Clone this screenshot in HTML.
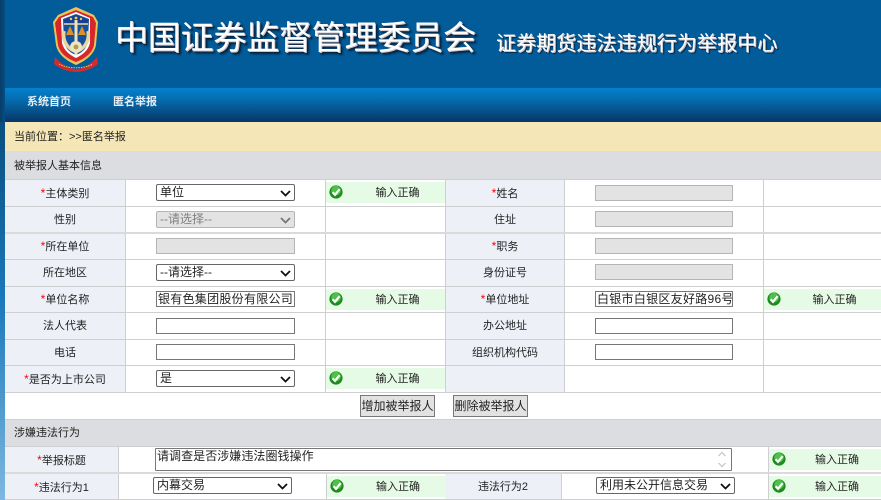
<!DOCTYPE html>
<html lang="zh-CN"><head><meta charset="utf-8"><title>中国证券监督管理委员会</title>
<style>
html,body{margin:0;padding:0;width:881px;height:500px;overflow:hidden;background:#fff}
body{position:relative;font-family:"Liberation Sans","Noto Sans CJK SC",sans-serif;font-size:12px;color:#222}
div,span.a{position:absolute;box-sizing:border-box}
.l{background:#eef0f8}
.h{background:#cfcfd2}
.t{text-align:center;line-height:26px;height:26px;white-space:nowrap;font-size:11px}
.t b{color:#f00;font-weight:normal;font-size:12px}
.ok{background:#e6fbe6;height:21px;line-height:22px;text-align:center;white-space:nowrap;font-size:11px;padding-left:24px}
.ok svg{position:absolute;left:3px;top:3px}
.d{background:#e3e3e3;border:1px solid #b5b5b5;height:16px;width:139px}
.i{background:#fff;border:1px solid #777;height:16px;width:139px;white-space:nowrap;overflow:hidden;line-height:14px;font-size:12px;padding:0 1px;letter-spacing:.28px}
.s{background:#fff;border:1px solid #666;border-radius:2px;height:17px;width:139px;line-height:15px;padding-left:3px;white-space:nowrap;color:#222;font-size:12px}
.s svg{position:absolute;right:3px;top:5px}
.s.off{background:#e3e3e3;border-color:#b5b5b5;color:#808080}
.btn{background:#e2e2e2;border:1px solid #777;height:22px;width:75px;line-height:20px;text-align:center;white-space:nowrap;font-size:12px;color:#222}
.sec{left:5px;width:876px;background:#dcdde0;line-height:26px;padding-left:9px;font-size:11px}
.title{font-family:"Liberation Sans","Noto Sans CJK SC",sans-serif;font-weight:400;color:#fff;white-space:nowrap;text-shadow:1px 1px 0 #c9c3c8,2px 2px 1px #0a2340,3px 3px 2px #06233f}
</style></head><body>
<svg width="0" height="0" style="position:absolute"><defs>
<symbol id="c" viewBox="0 0 14 14"><circle cx="7" cy="7" r="6.6" fill="#1f8a1f"/><circle cx="7" cy="5.6" r="4.8" fill="#4fc04a"/><path d="M3.6 7.2 6 9.8 10.6 4.2" fill="none" stroke="#fff" stroke-width="2.2"/></symbol>
<symbol id="v" viewBox="0 0 11 7"><path d="M1 1 5.5 5.5 10 1" fill="none" stroke="currentColor" stroke-width="1.8"/></symbol>
</defs></svg>

<div style="left:0;top:0;width:5px;height:500px;background:linear-gradient(#0a4a7a 0,#0a4f80 25%,#1a78bb 60%,#7fb8e0 100%)"></div>
<div style="left:5px;top:0;width:876px;height:88px;background:#025c9a"></div>
<div style="left:0;top:0;width:5px;height:122px;background:linear-gradient(90deg,#083c66,#034f85)"></div>
<div style="left:5px;top:88px;width:876px;height:33px;background:linear-gradient(#0380cc 0,#0570b4 30%,#06497f 80%,#07386a 100%)"></div>
<div style="left:5px;top:121px;width:876px;height:1px;background:#0b3a63"></div>

<svg style="position:absolute;left:50px;top:5px" width="52" height="68" viewBox="0 0 52 68">
<path d="M26 2 44 10 48 17 46 40C44 50 35 56 26 60 17 56 8 50 6 40L3 17 8 10Z" fill="#e6c65a"/>
<path d="M26 5 43 12 46 18 44 40C42 49 34 54 26 57 18 54 10 49 8 40L5 18 9 12Z" fill="#d8262a"/>
<path d="M26 7 40 13 40 38C38 46 32 50 26 53 20 50 14 46 12 38L11 13Z" fill="#fff"/>
<path d="M26 9 39 14 38 37C36 45 31 48 26 50 21 48 16 45 14 37L13 14Z" fill="#15509f"/>
<path d="M14 15 26 10 38 15 38 18 14 18Z" fill="#173f94"/>
<circle cx="21" cy="14" r="1.2" fill="#f2d04e"/><circle cx="26" cy="13" r="1.4" fill="#f2d04e"/><circle cx="31" cy="14" r="1.2" fill="#f2d04e"/>
<path d="M14 19H38" stroke="#e8dca0" stroke-width="1.6"/>
<path d="M26 15V50" stroke="#efe4b5" stroke-width="3"/>
<path d="M20 21 16 30H24Z M32 21 28 30H36Z" fill="#d9912c"/>
<path d="M14 26C12 36 18 44 25 46M38 26C40 36 34 44 27 46" fill="none" stroke="#e5d8a0" stroke-width="3.5"/>
<circle cx="26" cy="42" r="6" fill="#ece5c4"/><circle cx="26" cy="42" r="2.4" fill="#b79a45"/>
<path d="M5 52C12 60 20 64 26 64 32 64 40 60 47 52L48 59C40 65 32 67 26 67 20 67 12 65 4 59Z" fill="#d42a2c"/>
<path d="M9 59C18 64 34 64 43 59" fill="none" stroke="#efc85b" stroke-width="1" stroke-dasharray="1.5 1"/>
</svg>

<div class="title" style="left:115px;top:16px;font-size:33px;line-height:44px;letter-spacing:-.2px">中国证券监督管理委员会</div>
<div class="title" style="left:496px;top:30px;font-size:20px;line-height:28px;letter-spacing:.1px;text-shadow:1px 1px 0 #c9c3c8,2px 2px 1px #0a2340">证券期货违法违规行为举报中心</div>

<div style="left:27px;top:94px;color:#e8eef5;font-size:11px;line-height:16px;font-weight:700">系统首页</div>
<div style="left:113px;top:94px;color:#e8eef5;font-size:11px;line-height:16px;font-weight:700">匿名举报</div>

<div style="left:5px;top:122px;width:876px;height:30px;background:#f4e6b6;border-bottom:1px solid #ddd;line-height:31px;padding-left:9px;font-size:11px">当前位置：&gt;&gt;匿名举报</div>
<div class="sec" style="top:152px;height:27px;line-height:28px">被举报人基本信息</div>
<div class="h" style="left:5px;top:179px;width:876px;height:1px"></div>

<!-- table 1 backgrounds -->
<div class="l" style="left:5px;top:180px;width:120px;height:212px"></div>
<div class="l" style="left:446px;top:180px;width:118px;height:212px"></div>
<!-- vertical lines -->
<div class="h" style="left:125px;top:180px;width:1px;height:212px"></div>
<div class="h" style="left:325px;top:180px;width:1px;height:212px"></div>
<div class="h" style="left:445px;top:180px;width:1px;height:212px"></div>
<div class="h" style="left:564px;top:180px;width:1px;height:212px"></div>
<div class="h" style="left:763px;top:180px;width:1px;height:212px"></div>
<!-- horizontal lines -->
<div class="h" style="left:5px;top:206px;width:876px;height:1px"></div>
<div class="h" style="left:5px;top:232px;width:876px;height:2px;background:#dadada"></div>
<div class="h" style="left:5px;top:259px;width:876px;height:1px"></div>
<div class="h" style="left:5px;top:286px;width:876px;height:1px"></div>
<div class="h" style="left:5px;top:312px;width:876px;height:1px"></div>
<div class="h" style="left:5px;top:339px;width:876px;height:1px"></div>
<div class="h" style="left:5px;top:365px;width:876px;height:1px"></div>
<div class="h" style="left:5px;top:392px;width:876px;height:1px"></div>

<!-- left labels -->
<div class="t" style="left:5px;top:180px;width:120px"><b>*</b>主体类别</div>
<div class="t" style="left:5px;top:207px;width:120px">性别</div>
<div class="t" style="left:5px;top:233px;width:120px"><b>*</b>所在单位</div>
<div class="t" style="left:5px;top:260px;width:120px">所在地区</div>
<div class="t" style="left:5px;top:286px;width:120px"><b>*</b>单位名称</div>
<div class="t" style="left:5px;top:313px;width:120px">法人代表</div>
<div class="t" style="left:5px;top:340px;width:120px">电话</div>
<div class="t" style="left:5px;top:366px;width:120px"><b>*</b>是否为上市公司</div>

<!-- left inputs -->
<div class="s" style="left:156px;top:184px">单位<svg width="11" height="7" style="color:#111"><use href="#v"/></svg></div>
<div class="s off" style="left:156px;top:211px">--请选择--<svg width="11" height="7" style="color:#777"><use href="#v"/></svg></div>
<div class="d" style="left:156px;top:238px"></div>
<div class="s" style="left:156px;top:264px">--请选择--<svg width="11" height="7" style="color:#111"><use href="#v"/></svg></div>
<div class="i" style="left:156px;top:291px">银有色集团股份有限公司</div>
<div class="i" style="left:156px;top:318px"></div>
<div class="i" style="left:156px;top:344px"></div>
<div class="s" style="left:156px;top:370px">是<svg width="11" height="7" style="color:#111"><use href="#v"/></svg></div>

<!-- left status -->
<div class="ok" style="left:326px;top:182px;width:119px"><svg width="14" height="14"><use href="#c"/></svg>输入正确</div>
<div class="ok" style="left:326px;top:289px;width:119px"><svg width="14" height="14"><use href="#c"/></svg>输入正确</div>
<div class="ok" style="left:326px;top:368px;width:119px"><svg width="14" height="14"><use href="#c"/></svg>输入正确</div>

<!-- right labels -->
<div class="t" style="left:446px;top:180px;width:118px"><b>*</b>姓名</div>
<div class="t" style="left:446px;top:207px;width:118px">住址</div>
<div class="t" style="left:446px;top:233px;width:118px"><b>*</b>职务</div>
<div class="t" style="left:446px;top:260px;width:118px">身份证号</div>
<div class="t" style="left:446px;top:286px;width:118px"><b>*</b>单位地址</div>
<div class="t" style="left:446px;top:313px;width:118px">办公地址</div>
<div class="t" style="left:446px;top:340px;width:118px">组织机构代码</div>

<!-- right inputs -->
<div class="d" style="left:595px;top:185px;width:138px"></div>
<div class="d" style="left:595px;top:211px;width:138px"></div>
<div class="d" style="left:595px;top:238px;width:138px"></div>
<div class="d" style="left:595px;top:264px;width:138px"></div>
<div class="i" style="left:595px;top:291px;width:138px">白银市白银区友好路96号</div>
<div class="i" style="left:595px;top:318px;width:138px"></div>
<div class="i" style="left:595px;top:344px;width:138px"></div>

<div class="ok" style="left:764px;top:289px;width:117px"><svg width="14" height="14"><use href="#c"/></svg>输入正确</div>

<!-- buttons -->
<div class="btn" style="left:360px;top:395px">增加被举报人</div>
<div class="btn" style="left:453px;top:395px">删除被举报人</div>

<!-- section 2 -->
<div class="h" style="left:5px;top:419px;width:876px;height:1px"></div>
<div class="sec" style="top:420px;height:26px">涉嫌违法行为</div>
<div class="h" style="left:5px;top:446px;width:876px;height:1px"></div>
<div class="l" style="left:5px;top:447px;width:113px;height:53px"></div>
<div class="l" style="left:445px;top:473px;width:116px;height:27px"></div>
<div class="h" style="left:118px;top:447px;width:1px;height:53px"></div>
<div class="h" style="left:768px;top:447px;width:1px;height:53px"></div>
<div class="h" style="left:326px;top:473px;width:1px;height:27px"></div>
<div class="h" style="left:561px;top:473px;width:1px;height:27px"></div>
<div class="h" style="left:5px;top:472px;width:876px;height:2px;background:#dadada"></div>
<div class="h" style="left:5px;top:499px;width:876px;height:1px"></div>

<div class="t" style="left:5px;top:447px;width:113px"><b>*</b>举报标题</div>
<div class="t" style="left:5px;top:474px;width:113px"><b>*</b>违法行为1</div>
<div class="t" style="left:445px;top:474px;width:116px">违法行为2</div>

<div style="left:155px;top:448px;width:577px;height:23px;background:#fff;border:1px solid #777;border-radius:1px;line-height:14px;padding-left:1px;font-size:12px;letter-spacing:.05px;white-space:nowrap">请调查是否涉嫌违法圈钱操作
<svg style="position:absolute;right:4px;top:1px" width="10" height="19"><path d="M1.5 6 5 2.5 8.500 6M1.500 13 5 16.500 8.500 13" fill="none" stroke="#c4c4c4" stroke-width="1.200"/></svg></div>

<div class="s" style="left:153px;top:477px">内幕交易<svg width="11" height="7" style="color:#111"><use href="#v"/></svg></div>
<div class="s" style="left:596px;top:477px">利用未公开信息交易<svg width="11" height="7" style="color:#111"><use href="#v"/></svg></div>

<div class="ok" style="left:769px;top:449px;width:112px"><svg width="14" height="14"><use href="#c"/></svg>输入正确</div>
<div class="ok" style="left:327px;top:476px;width:118px"><svg width="14" height="14"><use href="#c"/></svg>输入正确</div>
<div class="ok" style="left:769px;top:476px;width:112px"><svg width="14" height="14"><use href="#c"/></svg>输入正确</div>
</body></html>
